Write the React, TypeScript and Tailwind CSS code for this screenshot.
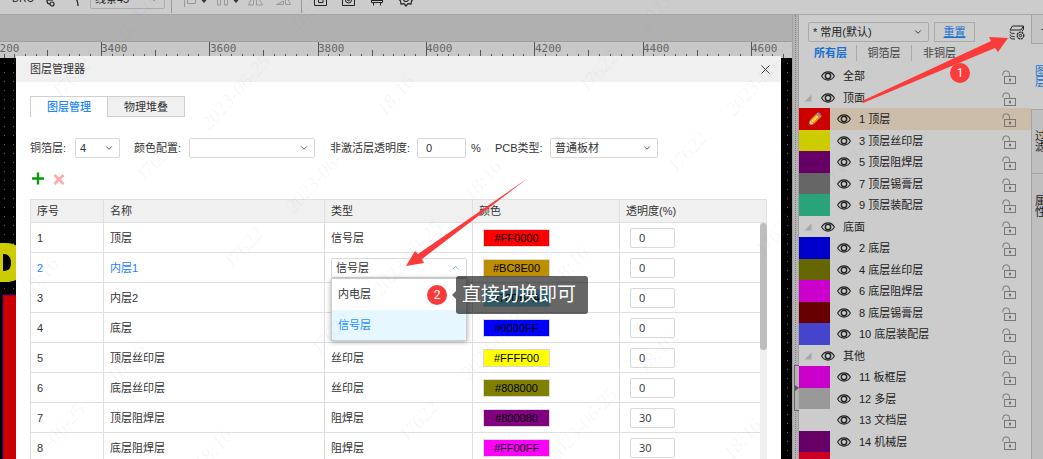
import { useState } from "react";
import { ChevronDown, ChevronUp, X } from "lucide-react";

type Row = { name: string; type: string; color: string; opacity: number };

type PanelLayer = { label: string; color?: string; group?: boolean; root?: boolean };

const ROWS: Row[] = [
  { name: "顶层", type: "信号层", color: "#FF0000", opacity: 0 },
  { name: "内层1", type: "信号层", color: "#BC8E00", opacity: 0 },
  { name: "内层2", type: "信号层", color: "#70DBFA", opacity: 0 },
  { name: "底层", type: "信号层", color: "#0000FF", opacity: 0 },
  { name: "顶层丝印层", type: "丝印层", color: "#FFFF00", opacity: 0 },
  { name: "底层丝印层", type: "丝印层", color: "#808000", opacity: 0 },
  { name: "顶层阻焊层", type: "阻焊层", color: "#800080", opacity: 30 },
  { name: "底层阻焊层", type: "阻焊层", color: "#FF00FF", opacity: 30 },
];

const LAYERS: PanelLayer[] = [
  { label: "全部", group: true, root: true },
  { label: "顶面", group: true },
  { label: "1 顶层", color: "#cc0000" },
  { label: "3 顶层丝印层", color: "#cccc00" },
  { label: "5 顶层阻焊层", color: "#660066" },
  { label: "7 顶层锡膏层", color: "#666666" },
  { label: "9 顶层装配层", color: "#29a37a" },
  { label: "底面", group: true },
  { label: "2 底层", color: "#0000cc" },
  { label: "4 底层丝印层", color: "#666600" },
  { label: "6 底层阻焊层", color: "#cc00cc" },
  { label: "8 底层锡膏层", color: "#660000" },
  { label: "10 底层装配层", color: "#4444cc" },
  { label: "其他", group: true },
  { label: "11 板框层", color: "#cc00cc" },
  { label: "12 多层", color: "#999999" },
  { label: "13 文档层", color: "#cccccc" },
  { label: "14 机械层", color: "#660066" },
  { label: "", color: "#cc0022" },
];

// [text, centre x, centre y]
const MARKS: [string, number, number][] = [
  ["J7622", 71, 78],
  ["J7622", 155, 161],
  ["J7622", 243, 248],
  ["J7622", 330, 334],
  ["J7622", 418, 421],
  ["J7622", 598, 71],
  ["J7622", 687, 152],
  ["J7622", 774, 235],
  ["2023-06-25", 145, 8],
  ["2023-06-25", 235, 92],
  ["2023-06-25", 320, 175],
  ["2023-06-25", 407, 258],
  ["2023-06-25", 495, 342],
  ["2023-06-25", 582, 425],
  ["2023-06-25", 50, 440],
  ["2023-06-25", 672, -8],
  ["2023-06-25", 760, 78],
  ["2023-06-25", 847, 162],
  ["18:16", 308, 10],
  ["18:16", 395, 95],
  ["18:16", 482, 180],
  ["18:16", 569, 266],
  ["18:16", 656, 353],
  ["18:16", 742, 439],
  ["18:16", 39, 277],
  ["18:16", 126, 363],
  ["18:16", 213, 449],
];

function EyeIcon() {
  return (
    <svg width="14" height="10" viewBox="0 0 14 10" fill="none" stroke="#222" className="shrink-0">
      <path d="M0.6 5C2.3 2.2 4.5 0.9 7 0.9s4.7 1.3 6.4 4.1C11.7 7.8 9.5 9.1 7 9.1S2.3 7.8 0.6 5z" strokeWidth="1.1" />
      <circle cx="7" cy="5" r="2.7" strokeWidth="1.4" />
    </svg>
  );
}

function UnlockIcon() {
  return (
    <svg width="15" height="14" viewBox="0 0 15 14" fill="none" stroke="#777" className="shrink-0">
      <path d="M0.8 5.5V4.2a3.4 3.4 0 0 1 6.8 0V7" />
      <rect x="2.5" y="6.5" width="11" height="7" />
      <path d="M8 8.6v3M7 9.8h2" stroke="#555" />
    </svg>
  );
}

function Select({ label, value, className, text }: { label: string; value: string; className: string; text?: string }) {
  return (
    <span className={`relative inline-flex h-5 shrink-0 items-center ${className}`}>
      <select
        aria-label={label}
        defaultValue={value}
        className={`h-full w-full appearance-none rounded-[2px] border pl-1 outline-none ${text ?? "border-[#d9d9d9] bg-white text-[#333]"}`}
      >
        <option value={value}>{value}</option>
      </select>
      <ChevronDown size={10} className="pointer-events-none absolute right-1.5" />
    </span>
  );
}

function Toolbar() {
  return (
    <header className="-mt-[17px] flex h-8 shrink-0 items-center border-b border-[#a6a6a6] bg-[#cccccc] pl-3 text-[#222]">
      <button className="w-8 text-left text-[10px]">DRC</button>
      <button aria-label="布线" className="w-7">
        <svg width="12" height="16" viewBox="0 0 12 16" fill="none" stroke="currentColor" strokeWidth="1.2">
          <path d="M3 1v9c0 2 1 3 3 3" />
          <circle cx="8" cy="13" r="2" />
          <path d="M3 9h6" />
        </svg>
      </button>
      <button aria-label="弧线" className="w-[18px]">
        <svg width="10" height="16" viewBox="0 0 10 16" fill="none" stroke="currentColor" strokeWidth="1.2">
          <path d="M1 6c3 0 5 4 5 9" />
        </svg>
      </button>
      <Select label="线条" value="线条45" className="w-[75px]" text="border-[#a8aab4] bg-[#cccccc] text-[#222]" />
      <span className="ml-1.5 h-7 w-px bg-[#999]" />
      <div className="flex w-[129px] items-center gap-2 pl-3 text-[#999]">
        <svg width="24" height="16" viewBox="0 0 24 16" fill="none" stroke="currentColor">
          <path d="M0.5 0v16M3.5 8.5h8v4h-8z" />
          <path d="M18 9l2 2.500L22 9z" fill="#333" stroke="#333" />
        </svg>
        <svg width="24" height="16" viewBox="0 0 24 16" fill="none" stroke="currentColor">
          <path d="M1.5 3v11h3V3M8.5 3v11h3V3" />
          <path d="M18 9l2 2.500L22 9z" fill="#333" stroke="#333" />
        </svg>
        <svg width="15" height="16" viewBox="0 0 15 16" fill="none" stroke="currentColor" className="shrink-0">
          <path d="M5.5 3v11h-5zM8.5 3v11h6z" />
        </svg>
        <svg width="15" height="16" viewBox="0 0 15 16" fill="none" stroke="currentColor" className="ml-[5px] shrink-0">
          <path d="M0.500 13.500h7V10zM9.500 3v10.500h5z" />
        </svg>
      </div>
      <span className="h-7 w-px bg-[#999]" />
      <div className="flex items-center gap-[14px] pl-3">
        <svg width="14" height="14" viewBox="0 0 14 14" fill="none" stroke="currentColor">
          <path d="M0.5 1v12.5h12V1M9 6.5H6.5M9 7.5v3H4.5V5" />
        </svg>
        <svg width="14" height="14" viewBox="0 0 14 14" fill="none" stroke="currentColor">
          <path d="M0.5 1v12.5h12V1" />
          <circle cx="6.5" cy="8" r="3" />
          <circle cx="6.5" cy="8" r="1" />
        </svg>
        <svg width="14" height="14" viewBox="0 0 14 14" fill="none" stroke="currentColor">
          <path d="M1.5 6.5h11v4h-11zM3.5 10.5v3M10.5 10.5v3M1 8.5h12" />
        </svg>
        <svg width="16" height="16" viewBox="0 0 16 16" fill="none" stroke="currentColor" strokeWidth="1.2">
          <path d="M8 1l2 2 3-.5.5 3L15.3 8l-1.800 2-.5 3-3-.3L8 15l-2-2.300-3 .3-.5-3L.7 8l1.800-2.500.5-3 3 .5z" />
          <circle cx="8" cy="8" r="2.5" />
        </svg>
      </div>
    </header>
  );
}

function Ruler() {
  const ticks = Array.from({ length: 76 }, (_, i) => i - 9);
  return (
    <svg className="block h-[17px] w-full shrink-0 border-t border-[#a0a0a0] bg-[#c8c8c8]">
      {ticks.map((i) => {
        const x = Math.round(101 + i * 10.83);
        const top = i % 10 === 0 ? 0 : i % 5 === 0 ? 8 : 12;
        return <rect key={i} x={x} y={top} width="1" height={17 - top} fill="#555" />;
      })}
      {[3200, 3400, 3600, 3800, 4000, 4200, 4400, 4600].map((n, i) => (
        <text key={n} x={Math.round(-7 + i * 108.3)} y="10" fontSize="11" fill="#666" fontFamily="DejaVu Sans Mono, monospace">
          {n}
        </text>
      ))}
    </svg>
  );
}

function Board() {
  return (
    <svg className="absolute inset-0 h-full w-full bg-black">
      <defs>
        <pattern id="grid-dots" width="9" height="9" patternUnits="userSpaceOnUse">
          <rect x="4" y="5" width="1" height="1" fill="#555" />
        </pattern>
      </defs>
      <rect width="100%" height="100%" fill="url(#grid-dots)" />
      <path d="M0 185h6c14 0 18 10 18 20s-4 19-18 19H0z" fill="#cccc00" />
      <path d="M3 196c5 0 8 3 8 9s-3 8-8 8z" fill="#000" />
      <path d="M3 237h30v200H3z" fill="#cc0000" stroke="#660066" />
    </svg>
  );
}

function TypeDropdown({ value }: { value: string }) {
  const [open, setOpen] = useState(true);
  return (
    <div className="relative w-[136px]">
      <button
        aria-expanded={open}
        onClick={() => setOpen(!open)}
        className="flex h-5 w-full items-center justify-between rounded-[2px] border border-[#d9d9d9] bg-white px-1 text-[#333]"
      >
        {value}
        <ChevronUp size={9} className="mr-0.5 text-[#2f9fd0]" />
      </button>
      {open && (
        <ul className="absolute inset-x-0 top-full z-10 border border-[#ccc] bg-white shadow-[0_1px_5px_rgba(0,0,0,0.35)]">
          <li className="flex h-[31px] items-center px-1.5 text-[#333]">内电层</li>
          <li className="flex h-[30px] items-center bg-[#e6f7ff] px-1.5 text-[#1890ff]">信号层</li>
        </ul>
      )}
    </div>
  );
}

function LayerTable() {
  return (
    <div className="relative mt-3">
      <table className="w-full table-fixed border-collapse text-left text-[#333]">
        <thead>
          <tr className="h-[23px] bg-[#f0f0f0]">
            <th className="w-[73px] border border-[#dfdfdf] px-1.5 font-normal">序号</th>
            <th className="w-[221px] border border-[#dfdfdf] px-1.5 font-normal">名称</th>
            <th className="w-[148px] border border-[#dfdfdf] px-1.5 font-normal">类型</th>
            <th className="w-[147px] border border-[#dfdfdf] px-1.5 font-normal">颜色</th>
            <th className="border border-[#dfdfdf] px-1.5 font-normal">透明度(%)</th>
          </tr>
        </thead>
        <tbody>
          {ROWS.map((row, i) => (
            <tr key={row.name} className={`h-[30px] ${i === 1 ? "text-[#1e80ff]" : ""}`}>
              <td className="border border-[#dfdfdf] px-1.5 py-0">{i + 1}</td>
              <td className="border border-[#dfdfdf] px-1.5 py-0">{row.name}</td>
              <td className={`border border-[#dfdfdf] py-0 ${i === 1 ? "pl-1.5" : "px-1.5"}`}>
                {i === 1 ? <TypeDropdown value={row.type} /> : row.type}
              </td>
              <td className="border border-[#dfdfdf] py-0 pl-2.5">
                <button
                  className="block h-[18px] w-[67px] border border-[#d9d9d9] text-center leading-4 text-black"
                  style={{ backgroundColor: row.color }}
                >
                  {row.color}
                </button>
              </td>
              <td className="border border-[#dfdfdf] py-0 pl-2.5">
                <input
                  aria-label={`${row.name}透明度`}
                  defaultValue={row.opacity}
                  className="block h-5 w-[45px] rounded-[2px] border border-[#d9d9d9] bg-white pl-2 font-['Open_Sans',sans-serif] text-[#333]"
                />
              </td>
            </tr>
          ))}
        </tbody>
      </table>
      <div className="absolute right-0 bottom-0 top-6 w-[7px] bg-[#f0f0f0]">
        <div className="h-[127px] rounded-full bg-[#bebebe]" />
      </div>
    </div>
  );
}

function LayerManager() {
  return (
    <section className="absolute left-4 right-[11px] top-[41px] min-h-full rounded-t-[2px] bg-white text-[#333]">
      <div className="flex h-[26px] items-center justify-between bg-[#f0f0f0] pl-[14px] pr-2">
        <h1>图层管理器</h1>
        <button aria-label="关闭">
          <X size={15} strokeWidth={1.5} />
        </button>
      </div>
      <div className="px-[14px] pt-[14px]">
        <div className="flex h-[21px]">
          <button className="w-[77px] border-l border-t border-[#cfcfcf] font-medium text-[#1e88ff]">图层管理</button>
          <button className="w-[78px] border border-[#cfcfcf] bg-[#f0f0f0]">物理堆叠</button>
        </div>

        <div className="mt-[21px] flex h-5 items-center whitespace-nowrap">
          <span className="w-[45px]">铜箔层:</span>
          <Select label="铜箔层" value="4" className="w-[45px]" />
          <span className="ml-[14px] w-[55px]">颜色配置:</span>
          <Select label="颜色配置" value="" className="w-[126px]" />
          <label htmlFor="inactive-opacity" className="ml-[15px] w-[87px]">
            非激活层透明度:
          </label>
          <input id="inactive-opacity" defaultValue="0" className="h-5 w-[49px] rounded-[2px] border border-[#d9d9d9] pl-2" />
          <span className="ml-[5px] w-6">%</span>
          <span className="w-[55px]">PCB类型:</span>
          <Select label="PCB类型" value="普通板材" className="w-[108px]" />
        </div>

        <div className="mt-[13px] flex h-4 items-center gap-2 pl-px">
          <button aria-label="添加">
            <svg width="14" height="14" viewBox="0 0 14 14" fill="none" stroke="#0a9a0a" strokeWidth="2.4" className="block">
              <path d="M7 0.5v12M1 6.500h12" />
            </svg>
          </button>
          <button aria-label="删除">
            <svg width="12" height="12" viewBox="0 0 12 12" fill="none" stroke="#ffabab" strokeWidth="2.8" className="block">
              <path d="M1.5 2l9 9M10.5 2l-9 9" />
            </svg>
          </button>
        </div>

        <LayerTable />
      </div>
    </section>
  );
}

function LayerRow({ layer, selected }: { layer: PanelLayer; selected: boolean }) {
  return (
    <li className={`flex items-center pr-[14px] odd:h-[22px] even:h-[21px] ${selected ? "bg-[#cbbda9]" : ""}`}>
      {layer.group ? (
        <span className="flex w-[22px] shrink-0 pl-[5px]">
          {!layer.root && (
            <svg width="8" height="8" viewBox="0 0 8 8" className="block">
              <path d="M7.5 0.5v7h-7z" fill="#a6a6a6" />
            </svg>
          )}
        </span>
      ) : (
        <span
          className="mr-[7px] flex w-[31px] shrink-0 items-center justify-center self-stretch"
          style={{ backgroundColor: layer.color }}
        >
          {selected && (
            <svg width="14" height="14" viewBox="0 0 14 14">
              <path d="M0.5 13.5l1.500-5.500 4 4z" fill="#e8c79a" />
              <path d="M0.5 13.5l.6-2.300 1.700 1.700z" fill="#333" />
              <path d="M2 8l6-6 4 4-6 6z" fill="#d98e12" />
              <path d="M3 9l6-6 1.800 1.800-6 6z" fill="#ffd24a" />
              <path d="M8 2l1.500-1.500 4 4L12 6z" fill="#9a9a9a" />
              <path d="M9.500 0.500c1.500-1 5 2.500 4 4z" fill="#c9605e" />
            </svg>
          )}
        </span>
      )}
      {layer.label && (
        <>
          <button aria-label={`显示 ${layer.label}`}>
            <EyeIcon />
          </button>
          <span className="ml-2 grow">{layer.label}</span>
          <button aria-label={`锁定 ${layer.label}`} className="pt-0.5">
            <UnlockIcon />
          </button>
        </>
      )}
    </li>
  );
}

function LayerPanel() {
  return (
    <aside className="flex w-[232px] shrink-0 flex-col overflow-hidden bg-[#cccccc] text-[#222]">
      <div className="mt-[7px] flex h-5 shrink-0 items-center pl-[9px] pr-1.5">
        <Select label="预设" value="* 常用(默认)" className="w-[121px]" text="border-[#a9a9a9] bg-[#cccccc] text-[#222]" />
        <button className="ml-[5px] h-5 w-[41px] border border-[#a9a9a9] text-[#1670d0] underline">重置</button>
        <button aria-label="图层管理器" className="ml-auto">
          <svg width="16" height="15" viewBox="0 0 16 15" fill="none" stroke="#222" className="block">
            <path d="M3.5 1h11L12 5H1z" />
            <path d="M14.5 1v3l-1.5 2.500" />
            <path d="M1 6.5c0 1.500 1.500 2 4.500 2M1 9.5c0 1.500 1.500 2 4.500 2M1 12c0 1.500 1.500 2 5 2" />
            <circle cx="11.5" cy="10.5" r="3.3" strokeDasharray="2 0.7" strokeWidth="1.3" />
            <circle cx="11.5" cy="10.5" r="1.2" />
          </svg>
        </button>
      </div>
      <nav className="mt-[3px] flex h-[15px] shrink-0 items-center pl-[15px]">
        <button className="w-[43px] border-r border-[#a9a9a9] text-left font-bold text-[#1670d0]">所有层</button>
        <button className="w-[55px] border-r border-[#a9a9a9] text-center text-[#444]">铜箔层</button>
        <button className="w-[55px] text-center text-[#444]">非铜层</button>
      </nav>
      <ul className="mt-[5px]">
        {LAYERS.map((layer, i) => (
          <LayerRow key={i} layer={layer} selected={i === 2} />
        ))}
      </ul>
    </aside>
  );
}

function SideTabs() {
  return (
    <nav className="flex w-3 shrink-0 flex-col overflow-hidden bg-[#bfbfbf] text-[#222]">
      <div className="flex h-[29px] shrink-0 items-center justify-end border-b border-l border-[#a3a3a3] bg-[#c4c4c4]">
        <span className="h-px w-0.5 bg-[#555]" />
      </div>
      <button className="h-[65px] w-3 shrink-0 overflow-hidden bg-[#cccccc] pl-1 text-left leading-[11px] text-[#1670d0]">
        <span className="block w-[11px] break-all">图层</span>
      </button>
      <button className="h-[65px] w-3 shrink-0 overflow-hidden border-y border-l border-[#a3a3a3] pl-[3px] text-left leading-[11px]">
        <span className="block w-[11px] break-all">过滤</span>
      </button>
      <button className="h-[65px] w-3 shrink-0 overflow-hidden border-l border-[#a3a3a3] pl-[3px] text-left leading-[11px]">
        <span className="block w-[11px] break-all">属性</span>
      </button>
      <div className="grow border-l border-[#a3a3a3]" />
    </nav>
  );
}

function Annotations() {
  return (
    <div className="pointer-events-none absolute inset-0 z-20">
      <svg className="absolute inset-0 h-full w-full">
        {MARKS.map(([text, x, y], i) => (
          <text
            key={i}
            x={x}
            y={y}
            transform={`rotate(-48 ${x} ${y})`}
            textAnchor="middle"
            dominantBaseline="central"
            fontFamily="Liberation Serif, serif"
            fontStyle="italic"
            fontSize="20"
            fill="#808080"
            fillOpacity="0.07"
          >
            {text}
          </text>
        ))}
        <path d="M862 101L991 41L989 37L1008 38L998 52L995 48L863 103Z" fill="#fb3a3a" />
        <path d="M528 178L418 254L415 251L406 266L424 263L422 259Z" fill="#fb3a3a" />
      </svg>
      <span className="absolute left-[950px] top-[63px] flex size-5 items-center justify-center rounded-full bg-[#fb3a3a] font-['Roboto',sans-serif] text-[12px] text-white">
        1
      </span>
      <span className="absolute left-[427px] top-[285px] flex size-5 items-center justify-center rounded-full bg-[#fb3a3a] font-['Roboto',sans-serif] text-[12px] text-white">
        2
      </span>
      <div className="absolute left-[452px] top-[276px] flex items-center">
        <svg width="4" height="8" viewBox="0 0 4 8">
          <path d="M4 0v8L0 4z" fill="#000" fillOpacity="0.6" />
        </svg>
        <p className="h-[38px] w-[132px] rounded-[3px] bg-black/60 pl-1.5 text-[19px] leading-[38px] whitespace-nowrap text-white">
          直接切换即可
        </p>
      </div>
    </div>
  );
}

export default function App() {
  return (
    <div className="relative flex h-screen flex-col overflow-hidden bg-[#cccccc] font-['Liberation_Sans','Noto_Sans_CJK_SC',sans-serif] text-[11px] leading-4">
      <Toolbar />
      <div className="flex min-h-0 grow">
        <main className="relative flex min-w-0 grow flex-col overflow-hidden">
          <div className="h-[26px] shrink-0 bg-[#b0b0b0]" />
          <Ruler />
          <div className="relative grow">
            <Board />
          </div>
          <LayerManager />
        </main>
        <div className="relative w-[7px] shrink-0 border-x border-[#a0a0a0] bg-[#b4b4b4]">
          <div className="mx-auto h-full w-px border-l border-dotted border-[#808080]" />
          <button aria-label="收起面板" className="absolute left-px top-[350px] h-[46px] w-[5px] border border-r-0 border-[#666] bg-[#b4b4b4]">
            <svg width="4" height="6" viewBox="0 0 4 6" className="block">
              <path d="M0 0l4 3-4 3z" fill="#555" />
            </svg>
          </button>
        </div>
        <LayerPanel />
        <SideTabs />
      </div>
      <Annotations />
    </div>
  );
}
